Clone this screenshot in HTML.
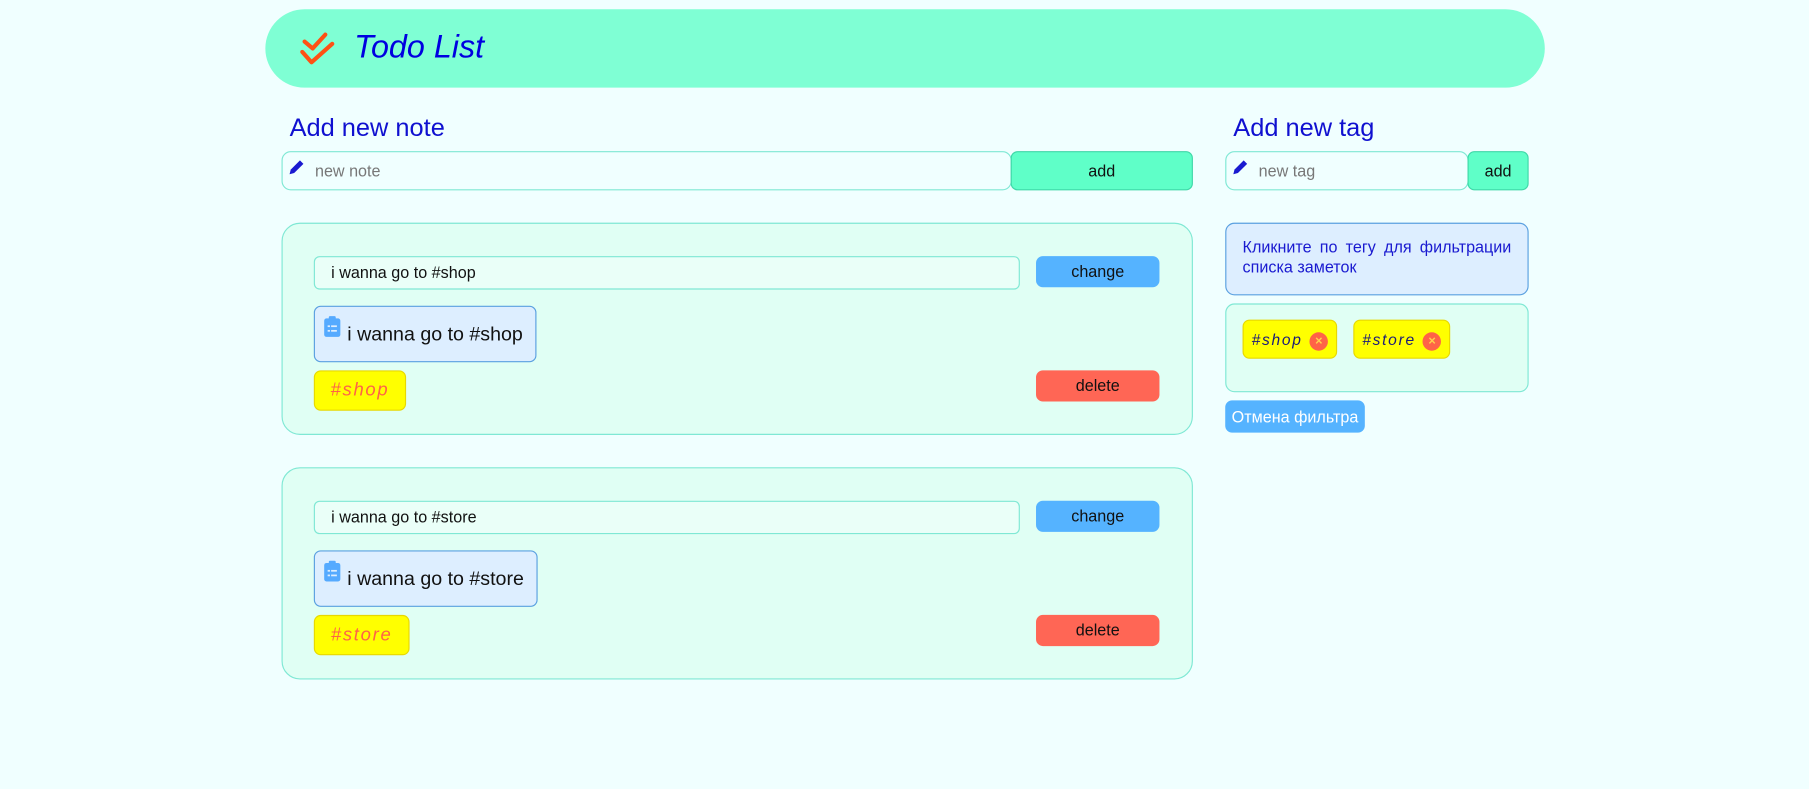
<!DOCTYPE html>
<html><head><meta charset="utf-8"><style>
html,body{margin:0;padding:0;background:#f0ffff;width:1809px;height:789px;overflow:hidden}
#w{position:absolute;left:0;top:0;width:1568px;height:684px;transform:scale(1.15370);transform-origin:0 0;font-family:"Liberation Sans",sans-serif}
.a{position:absolute;box-sizing:border-box}
.hdr{left:230px;top:8px;width:1109px;height:68px;border-radius:34px;background:#7fffd4}
.ttl{left:307px;top:25px;font-size:28px;font-style:italic;color:#0000e0}
.h2{font-size:22px;color:#1010d0}
.inp{border:1px solid #7fe8d4;border-radius:8px;background:#f0ffff;font-size:14px;color:#777;padding-left:28px;line-height:32px}
.btn{border-radius:6px;font-size:14px;color:#111;text-align:center}
.card{border:1px solid #7fe8d4;border-radius:16px;background:#e0fff4}
.ni{border:1px solid #7fe8d4;border-radius:5px;font-size:14px;color:#111;padding-left:14px;line-height:27px;background:#eafff8}
.nd{border:1px solid #5aa0e0;border-radius:6px;background:#ddeeff;font-size:17px;color:#111;line-height:48px;padding-left:28px}
.tg{background:#ffff00;border:1px solid #e8d800;border-radius:6px;font-style:italic;letter-spacing:1.5px;color:#ff6347;font-size:16px;text-align:center;line-height:33px}
.x{display:inline-block;width:16px;height:16px;border-radius:8px;background:#ff6347;color:#ffd24a;font-size:11px;line-height:16px;text-align:center;font-style:normal;letter-spacing:0;vertical-align:0px;margin-left:6px;font-weight:bold}
</style></head><body><div id="w">
<div class="a hdr"></div>
<svg class="a" style="left:0;top:0" width="400" height="80"><g fill="none" stroke="#ff5014" stroke-width="3.6" stroke-linecap="round" stroke-linejoin="round"><path d="M264 36 L271 42 L282 30"/><path d="M262 45 L270 54 L288 38"/></g></svg>
<div class="a ttl">Todo List</div>

<div class="a h2" style="left:251px;top:98px">Add new note</div>
<div class="a inp" style="left:244px;top:131px;width:633px;height:34px">new note</div>
<svg class="a" style="left:249px;top:137px" width="16" height="16"><path d="M2 14 L3 10 L11 2 L14 5 L6 13 Z" fill="#1a1ad0"/></svg>
<div class="a btn" style="left:876px;top:131px;width:158px;height:34px;background:#5fffc8;border:1px solid #3fd8a8;line-height:32px">add</div>

<div class="a h2" style="left:1069px;top:98px">Add new tag</div>
<div class="a inp" style="left:1062px;top:131px;width:211px;height:34px">new tag</div>
<svg class="a" style="left:1067px;top:137px" width="16" height="16"><path d="M2 14 L3 10 L11 2 L14 5 L6 13 Z" fill="#1a1ad0"/></svg>
<div class="a btn" style="left:1272px;top:131px;width:53px;height:34px;background:#5fffc8;border:1px solid #3fd8a8;line-height:32px">add</div>

<div class="a card" style="left:244px;top:193px;width:790px;height:184px"></div>
<div class="a ni" style="left:272px;top:222px;width:612px;height:29px">i wanna go to #shop</div>
<div class="a btn" style="left:898px;top:222px;width:107px;height:27px;background:#55b3ff;line-height:27px">change</div>
<div class="a nd" style="left:272px;top:265px;width:193px;height:49px">i wanna go to #shop</div>
<svg class="a" style="left:280px;top:273px" width="16" height="20"><rect x="1" y="3" width="14" height="16" rx="2" fill="#55aaff"/><rect x="5" y="1" width="6" height="4" rx="1" fill="#55aaff"/><g fill="#ddeeff"><rect x="4" y="9" width="2" height="1.5"/><rect x="7" y="9" width="5" height="1.5"/><rect x="4" y="13" width="2" height="1.5"/><rect x="7" y="13" width="5" height="1.5"/></g></svg>
<div class="a tg" style="left:272px;top:321px;width:80px;height:35px">#shop</div>
<div class="a btn" style="left:898px;top:321px;width:107px;height:27px;background:#ff6655;line-height:27px">delete</div>

<div class="a card" style="left:244px;top:405px;width:790px;height:184px"></div>
<div class="a ni" style="left:272px;top:434px;width:612px;height:29px">i wanna go to #store</div>
<div class="a btn" style="left:898px;top:434px;width:107px;height:27px;background:#55b3ff;line-height:27px">change</div>
<div class="a nd" style="left:272px;top:477px;width:194px;height:49px">i wanna go to #store</div>
<svg class="a" style="left:280px;top:485px" width="16" height="20"><rect x="1" y="3" width="14" height="16" rx="2" fill="#55aaff"/><rect x="5" y="1" width="6" height="4" rx="1" fill="#55aaff"/><g fill="#ddeeff"><rect x="4" y="9" width="2" height="1.5"/><rect x="7" y="9" width="5" height="1.5"/><rect x="4" y="13" width="2" height="1.5"/><rect x="7" y="13" width="5" height="1.5"/></g></svg>
<div class="a tg" style="left:272px;top:533px;width:83px;height:35px">#store</div>
<div class="a btn" style="left:898px;top:533px;width:107px;height:27px;background:#ff6655;line-height:27px">delete</div>

<div class="a" style="left:1062px;top:193px;width:263px;height:63px;border:1px solid #5aa0e0;border-radius:8px;background:#ddeeff;color:#1a1ad0;font-size:14px;padding:12px 14px 0;text-align:justify;text-align-last:left;line-height:17px">Кликните по тегу для фильтрации списка заметок</div>
<div class="a card" style="left:1062px;top:263px;width:263px;height:77px;border-radius:8px"></div>
<div class="a tg" style="left:1077px;top:277px;width:82px;height:34px;color:#1a1a7a;font-size:13.5px;line-height:33px">#shop<span class="x">×</span></div>
<div class="a tg" style="left:1173px;top:277px;width:84px;height:34px;color:#1a1a7a;font-size:13.5px;line-height:33px">#store<span class="x">×</span></div>
<div class="a btn" style="left:1062px;top:347px;width:121px;height:28px;background:#55b3ff;color:#fff;line-height:28px">Отмена фильтра</div>
</div></body></html>
